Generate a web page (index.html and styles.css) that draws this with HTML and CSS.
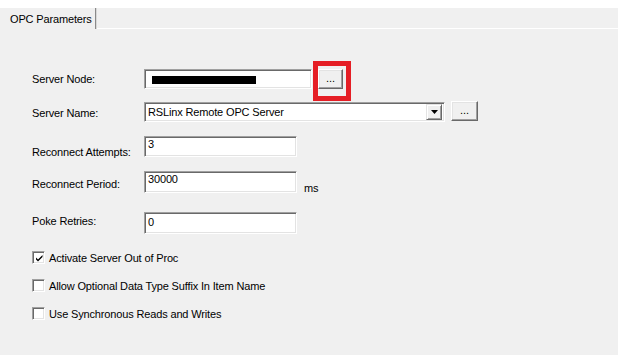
FILE: index.html
```html
<!DOCTYPE html>
<html>
<head>
<meta charset="utf-8">
<link rel="stylesheet" href="styles.css">
</head>
<body>
<div class="strip"></div>
<div class="tabctl">
  <div class="tabbar">
    <div class="tab">OPC Parameters</div>
    <div class="tabrest"></div>
  </div>
  <div class="panel">
    <div class="row r1">
      <div class="lbl l1">Server Node:</div>
      <div class="edit node"><span class="redact"></span></div>
      <div class="mark"><div class="btn dots">...</div></div>
    </div>
    <div class="row r2">
      <div class="lbl l2">Server Name:</div>
      <div class="edit combo"><span class="val">RSLinx Remote OPC Server</span>
        <span class="drop"><svg width="7" height="4" viewBox="0 0 7 4"><path d="M0 0h7L3.5 4z" fill="#000"/></svg></span>
      </div>
      <div class="btn dots dots2">...</div>
    </div>
    <div class="row r3">
      <div class="lbl l3">Reconnect Attempts:</div>
      <div class="edit num">3</div>
    </div>
    <div class="row r4">
      <div class="lbl l4">Reconnect Period:</div>
      <div class="edit num">30000</div>
      <div class="unit">ms</div>
    </div>
    <div class="row r5">
      <div class="lbl l5">Poke Retries:</div>
      <div class="edit num">0</div>
    </div>
    <div class="chk c1"><span class="box"><svg width="9" height="9" viewBox="0 0 9 9"><path d="M1 3.5l2 2 4.5-4.5v2L3 7.5 1 5.5z" fill="#000"/></svg></span><span>Activate Server Out of Proc</span></div>
    <div class="chk"><span class="box"></span><span>Allow Optional Data Type Suffix In Item Name</span></div>
    <div class="chk"><span class="box"></span><span>Use Synchronous Reads and Writes</span></div>
  </div>
</div>
</body>
</html>
```
FILE: styles.css
```css
html, body { margin: 0; padding: 0; }
body {
  background: #f0f0f0;
  font-family: "Liberation Sans", Arial, sans-serif;
  font-size: 11px;
  letter-spacing: -0.15px;
  color: #000;
}
.strip { height: 8px; background: #fff; }
.tabctl { margin-left: 3px; }
.tabbar { display: flex; height: 21px; }
.tab {
  width: 93px; height: 21px;
  border-right: 1px solid #8a8a8a;
  box-shadow: 1px 0 0 #d8d8d8;
  padding-left: 7px; box-sizing: border-box;
  line-height: 22px;
  position: relative; z-index: 1;
}
.tabrest { flex: 1; border-bottom: 1px solid #fff; }
.panel { padding-left: 29px; padding-bottom: 20px; }
.row { display: flex; align-items: flex-start; }
.lbl { width: 112px; }
.edit {
  background: #fff; box-sizing: border-box;
  border-top: 1px solid #a0a0a0; border-left: 1px solid #a0a0a0;
  border-right: 1px solid #fff; border-bottom: 1px solid #fff;
  box-shadow: inset 1px 1px 0 #696969, inset -1px -1px 0 #e3e3e3;
}
.r1 { margin-top: 40px; height: 20px; }
.l1 { padding-top: 4px; }
.node { width: 168px; height: 20px; padding: 6px 0 0 7px; }
.redact { display: block; width: 104px; height: 8px; background: #000; }
.mark {
  margin: -8px 0 0 1px;
  border: 5px solid #e51e25;
  padding: 3px 3px 7px 0;
}
.btn {
  background: #f0f0f0; box-sizing: border-box;
  border-top: 1px solid #fff; border-left: 1px solid #fff;
  border-right: 1px solid #696969; border-bottom: 1px solid #696969;
  box-shadow: inset -1px -1px 0 #a0a0a0, inset 1px 1px 0 #e3e3e3;
  text-align: center;
  letter-spacing: 0;
}
.dots { width: 25px; height: 20px; line-height: 16px; }
.r2 { margin-top: 13px; height: 20px; }
.l2 { padding-top: 5px; }
.combo { width: 301px; height: 20px; display: flex; justify-content: space-between; padding: 2px 2px 2px 3px; }
.val { line-height: 14px; }
.drop {
  width: 16px; height: 16px; box-sizing: border-box; margin-top: -1px;
  background: #f0f0f0;
  border-top: 1px solid #e3e3e3; border-left: 1px solid #e3e3e3;
  border-right: 1px solid #696969; border-bottom: 1px solid #696969;
  box-shadow: inset 1px 1px 0 #fff, inset -1px -1px 0 #a0a0a0;
  display: flex; align-items: center; justify-content: center;
}
.dots2 { margin: -1px 0 0 6px; width: 27px; }
.num { width: 153px; height: 21px; padding: 1px 0 0 3px; line-height: 12px; }
.r3 { margin-top: 14px; height: 21px; }
.l3 { padding-top: 10px; }
.r4 { margin-top: 14px; height: 22px; }
.r4 .num { height: 22px; }
.l4 { padding-top: 7px; }
.unit { margin: 11px 0 0 7px; }
.r5 { margin-top: 19px; height: 22px; }
.r5 .num { height: 22px; padding-top: 3px; }
.l5 { padding-top: 3px; }
.chk { display: flex; align-items: center; gap: 4px; height: 13px; margin-top: 15px; }
.c1 { margin-top: 17px; }
.box {
  width: 13px; height: 13px; box-sizing: border-box; background: #fff;
  border-top: 1px solid #a0a0a0; border-left: 1px solid #a0a0a0;
  border-right: 1px solid #fff; border-bottom: 1px solid #fff;
  box-shadow: inset 1px 1px 0 #696969, inset -1px -1px 0 #e3e3e3;
  display: flex; align-items: center; justify-content: center;
}
.box svg { margin: 1px 0 0 1px; }
```
